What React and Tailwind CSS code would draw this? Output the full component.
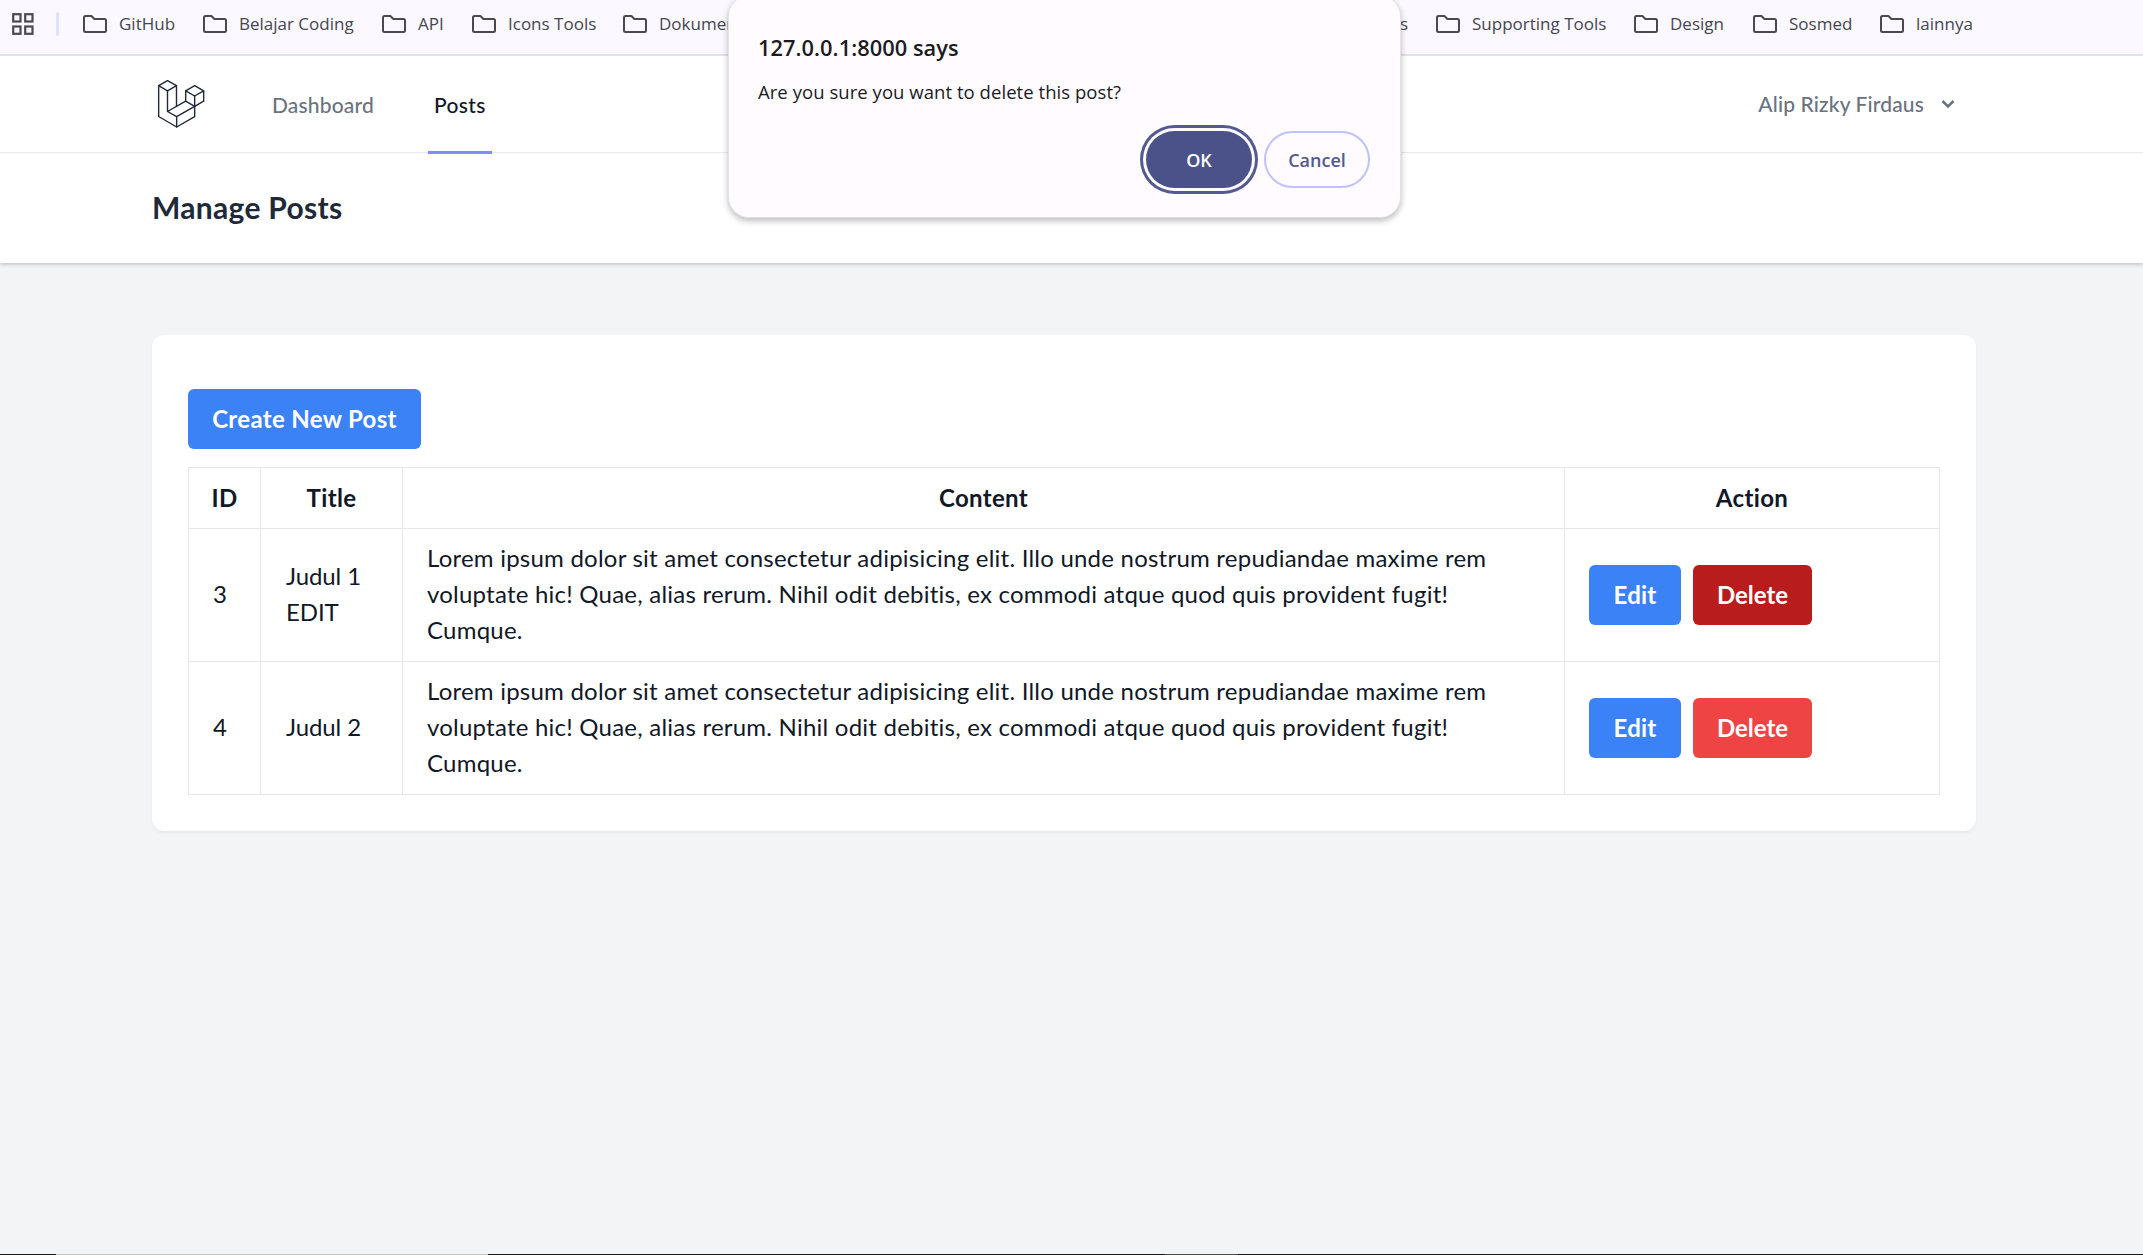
import React from "react";

const leftBookmarks = [
  { label: "GitHub", width: "w-[120px]" },
  { label: "Belajar Coding", width: "w-[179px]" },
  { label: "API", width: "w-[90px]" },
  { label: "Icons Tools", width: "w-[151px]" },
  { label: "Dokumen", width: "w-[120px]" },
];

const rightBookmarks = [
  { label: "Supporting Tools", width: "w-[198px]" },
  { label: "Design", width: "w-[119px]" },
  { label: "Sosmed", width: "w-[127px]" },
  { label: "lainnya", width: "w-[120px]" },
];

const lorem =
  "Lorem ipsum dolor sit amet consectetur adipisicing elit. Illo unde nostrum repudiandae maxime rem voluptate hic! Quae, alias rerum. Nihil odit debitis, ex commodi atque quod quis provident fugit! Cumque.";

const posts = [
  { id: 3, title: "Judul 1 EDIT", content: lorem, deleteColor: "bg-[#b91c1c]" },
  { id: 4, title: "Judul 2", content: lorem, deleteColor: "bg-[#ef4444]" },
];

function FolderIcon() {
  return (
    <svg className="h-[18px] w-6 shrink-0" viewBox="0 0 24 18" fill="none" stroke="#4a4950" strokeWidth="2">
      <path d="M2.5 1H8.4L11.4 4H21.5Q23 4 23 5.500V15.500Q23 17 21.500 17H2.500Q1 17 1 15.500V2.500Q1 1 2.500 1Z" strokeLinejoin="round" />
    </svg>
  );
}

function AppsIcon() {
  return (
    <svg className="h-[22px] w-[22px] shrink-0" viewBox="0 0 22 22" fill="none" stroke="#4a4950" strokeWidth="2.200">
      <rect x="1.200" y="1.200" width="7.300" height="7.300" />
      <rect x="13.200" y="1.200" width="7.300" height="7.300" />
      <rect x="1.200" y="13.500" width="7.300" height="7.300" />
      <rect x="13.200" y="13.500" width="7.300" height="7.300" />
    </svg>
  );
}

function LaravelLogo() {
  return (
    <svg
      className="h-[54px] w-[54px] shrink-0"
      viewBox="36 51 162 162"
      fill="none"
      stroke="#1f2937"
      strokeWidth="4.200"
      strokeLinejoin="round"
      strokeLinecap="round"
    >
      <path d="M82.500 62L109.500 77L82.500 92.500L56 77Z" />
      <path d="M56 77V169.500L110 201L164 170V139" />
      <path d="M82.500 92.500V154.500L110 170V201M110 170L164 139L137 123.500L82.500 154.500" />
      <path d="M109.500 77V139" />
      <path d="M137 92.500L164 77L191 92.500L164 108Z" />
      <path d="M137 92.500V123.500M191 92.500V123.500L164 139V108" />
    </svg>
  );
}

function Bookmark({ label, width }) {
  return (
    <div className={`flex h-full shrink-0 items-center ${width}`}>
      <FolderIcon />
      <span className="ml-[12px] whitespace-nowrap">{label}</span>
    </div>
  );
}

function BookmarksBar() {
  return (
    <div className="flex h-[56px] items-start border-b-2 border-[#e2e1ec] bg-[#fbf8ff] font-['Open_Sans','Noto_Sans',sans-serif] text-[17px] text-[#46464f]">
      <div className="flex h-[48px] w-full items-center pl-3">
        <AppsIcon />
        <div className="ml-[22px] mr-[24px] h-6 w-[3px] rounded-full bg-[#e0e0ff]" />
        {leftBookmarks.map((b) => (
          <Bookmark key={b.label} {...b} />
        ))}
        <span className="ml-auto w-9 shrink-0">s</span>
        <div className="mr-[143px] flex h-full">
          {rightBookmarks.map((b) => (
            <Bookmark key={b.label} {...b} />
          ))}
        </div>
      </div>
    </div>
  );
}

function NavBar() {
  return (
    <nav className="flex h-[97px] items-center border-b border-[#ebecef] bg-white px-[152px] text-[21px] font-medium">
      <LaravelLogo />
      <a className="ml-[66px] pt-[2px] tracking-[0.16px] text-[#6b7280]">Dashboard</a>
      <a className="relative ml-[54px] flex h-full w-16 items-center justify-center pt-[2px] tracking-[0.4px] text-[#111827]">
        Posts
        <span className="absolute inset-x-0 -bottom-[2px] h-[3px] bg-[#818cf8]" />
      </a>
      <button className="ml-auto mr-[36px] flex items-center tracking-[0.14px] text-[#6b7280]">
        Alip Rizky Firdaus
        <svg className="ml-[17px] h-3 w-[14px]" viewBox="0 0 14 12" fill="none" stroke="#6b7280" strokeWidth="2.500">
          <path d="M1.500 3L7 8.500L12.500 3" />
        </svg>
      </button>
    </nav>
  );
}

function ActionButton({ children, className }) {
  return (
    <button className={`h-[60px] rounded-[6px] text-center font-bold text-white ${className}`}>{children}</button>
  );
}

function PostsTable() {
  return (
    <table className="mt-[18px] w-[1752px] table-fixed border-collapse leading-9 text-[#111827]">
      <colgroup>
        <col className="w-[72px]" />
        <col className="w-[142px]" />
        <col className="w-[1162px]" />
        <col className="w-[375px]" />
      </colgroup>
      <thead>
        <tr>
          {["ID", "Title", "Content", "Action"].map((h) => (
            <th key={h} className="border border-[#e5e7eb] py-3 text-center font-bold tracking-[0.35px]">
              {h}
            </th>
          ))}
        </tr>
      </thead>
      <tbody>
        {posts.map((p) => (
          <tr key={p.id}>
            <td className="border border-[#e5e7eb] px-6 pb-[13px] pt-[11px]">{p.id}</td>
            <td className="border border-[#e5e7eb] pb-[13px] pl-[25px] pr-6 pt-[11px] tracking-[-0.100px]">{p.title}</td>
            <td className="border border-[#e5e7eb] pb-[13px] pl-6 pr-[70px] pt-[11px] tracking-[0.225px]">{p.content}</td>
            <td className="border border-[#e5e7eb] px-6 py-3">
              <div className="flex gap-3">
                <ActionButton className="w-[92px] bg-[#3b82f6] tracking-[0.200px]">Edit</ActionButton>
                <ActionButton className={`w-[119px] tracking-[-0.050px] ${p.deleteColor}`}>Delete</ActionButton>
              </div>
            </td>
          </tr>
        ))}
      </tbody>
    </table>
  );
}

function ConfirmDialog() {
  return (
    <div
      role="dialog"
      className="absolute -top-1 left-[729px] h-[221px] w-[671px] rounded-[20px] bg-[#fffbff] px-[30px] font-['Open_Sans','Noto_Sans',sans-serif] text-[#1b1b1f] shadow-[0_0_0_1px_#e2e1e6,0_3px_6px_1px_rgba(0,0,0,0.260)]"
    >
      <h2 className="-ml-px pt-[36px] text-[21.8px] font-semibold leading-8 tracking-[0.050px]">127.0.0.1:8000 says</h2>
      <p className="-ml-px mt-[14px] text-[18.5px] leading-7 tracking-[0.050px]">Are you sure you want to delete this post?</p>
      <div className="mt-[25px] flex justify-end gap-3 text-[18px] font-semibold">
        <button className="h-[57px] w-[106px] rounded-full bg-[#4b5289] pt-px text-white shadow-[0_0_0_3px_#fffbff,0_0_0_6px_#535a92]">
          OK
        </button>
        <button className="h-[57px] w-[106px] rounded-full border-2 border-[#bec2ff] pt-px text-[#535a92]">Cancel</button>
      </div>
    </div>
  );
}

export default function App() {
  return (
    <div className="relative flex h-[1255px] w-[2143px] flex-col overflow-hidden bg-[#f3f4f6] font-['Lato','Open_Sans',sans-serif] text-[24px]">
      <BookmarksBar />
      <NavBar />
      <header className="flex h-[110px] items-center bg-white px-[152px] pb-[3px] shadow-[0_1.5px_4.5px_rgba(0,0,0,0.1),0_1.5px_3px_rgba(0,0,0,0.1)]">
        <h1 className="text-[30px] font-bold leading-none tracking-[0.3px] text-[#1f2937]">Manage Posts</h1>
      </header>
      <main className="mx-[152px] mt-[72px] h-[496px] w-[1824px] rounded-[12px] bg-white px-9 pt-[54px] shadow-[0_1.5px_3px_rgba(0,0,0,0.05)]">
        <ActionButton className="block w-[233px] bg-[#3b82f6] tracking-[0.33px]">Create New Post</ActionButton>
        <PostsTable />
      </main>
      <div className="mt-auto flex h-px bg-[#1a1718]">
        <div className="ml-[56px] w-[432px] bg-[#c0c0c0]" />
        <div className="ml-[677px] w-[73px] bg-[#4d4b4c]" />
      </div>
      <ConfirmDialog />
    </div>
  );
}
